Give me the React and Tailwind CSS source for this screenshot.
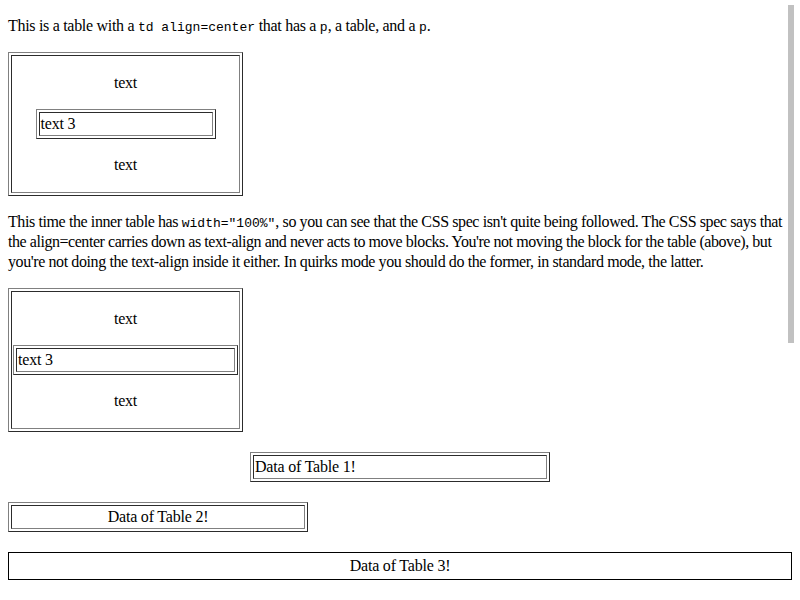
import React from 'react';

// table border="1": outset gray frame, 2px cellspacing, inset cell with 1px padding
function Frame({ className = '', children }) {
  return (
    <div className={`border border-t-[#808080] border-l-[#808080] border-b-[#2c2c2c] border-r-[#2c2c2c] p-[2px] ${className}`}>
      <div className="border border-t-[#2c2c2c] border-l-[#2c2c2c] border-b-[#808080] border-r-[#808080] p-[1px]">
        {children}
      </div>
    </div>
  );
}

function Code({ children }) {
  return <code className="font-['Liberation_Mono',monospace] text-[13px] leading-none tracking-normal">{children}</code>;
}

function NestedTable({ innerClass }) {
  return (
    <Frame className="mt-4 w-[235px]">
      <p className="my-4 text-center">text</p>
      <Frame className={innerClass}>text 3</Frame>
      <p className="my-4 text-center">text</p>
    </Frame>
  );
}

export default function App() {
  return (
    <div className="relative min-h-screen bg-white px-2 text-black text-[16px] leading-[20px] tracking-[-0.2px] font-['Liberation_Serif','Times_New_Roman',serif]">
      <p className="h-9 pt-4 tracking-[-0.3px]">
        This is a table with a <Code>td align=center</Code> that has a <Code>p</Code>, a table, and a <Code>p</Code>.
      </p>

      <NestedTable innerClass="mx-auto w-[180px]" />

      <div className="mt-4 h-[60px] whitespace-nowrap">
        <p className="h-5 tracking-[-0.4px]">
          This time the inner table has <Code>width="100%"</Code>, so you can see that the CSS spec isn't quite being followed. The CSS spec says that
        </p>
        <p className="h-5 tracking-[-0.45px]">
          the align=center carries down as text-align and never acts to move blocks. You're not moving the block for the table (above), but
        </p>
        <p className="h-5 tracking-[-0.4px]">
          you're not doing the text-align inside it either. In quirks mode you should do the former, in standard mode, the latter.
        </p>
      </div>

      <NestedTable innerClass="w-full" />

      <Frame className="mx-auto mt-5 w-[300px]">Data of Table 1!</Frame>

      <Frame className="mt-5 w-[300px]">
        <div className="text-center">Data of Table 2!</div>
      </Frame>

      <div className="mt-5 border border-black p-[3px] text-center">Data of Table 3!</div>

      {/* overlay scrollbar thumb */}
      <div className="fixed left-[788px] top-[5px] h-[338px] w-[6px] bg-[#c1c1c1]" />
    </div>
  );
}
